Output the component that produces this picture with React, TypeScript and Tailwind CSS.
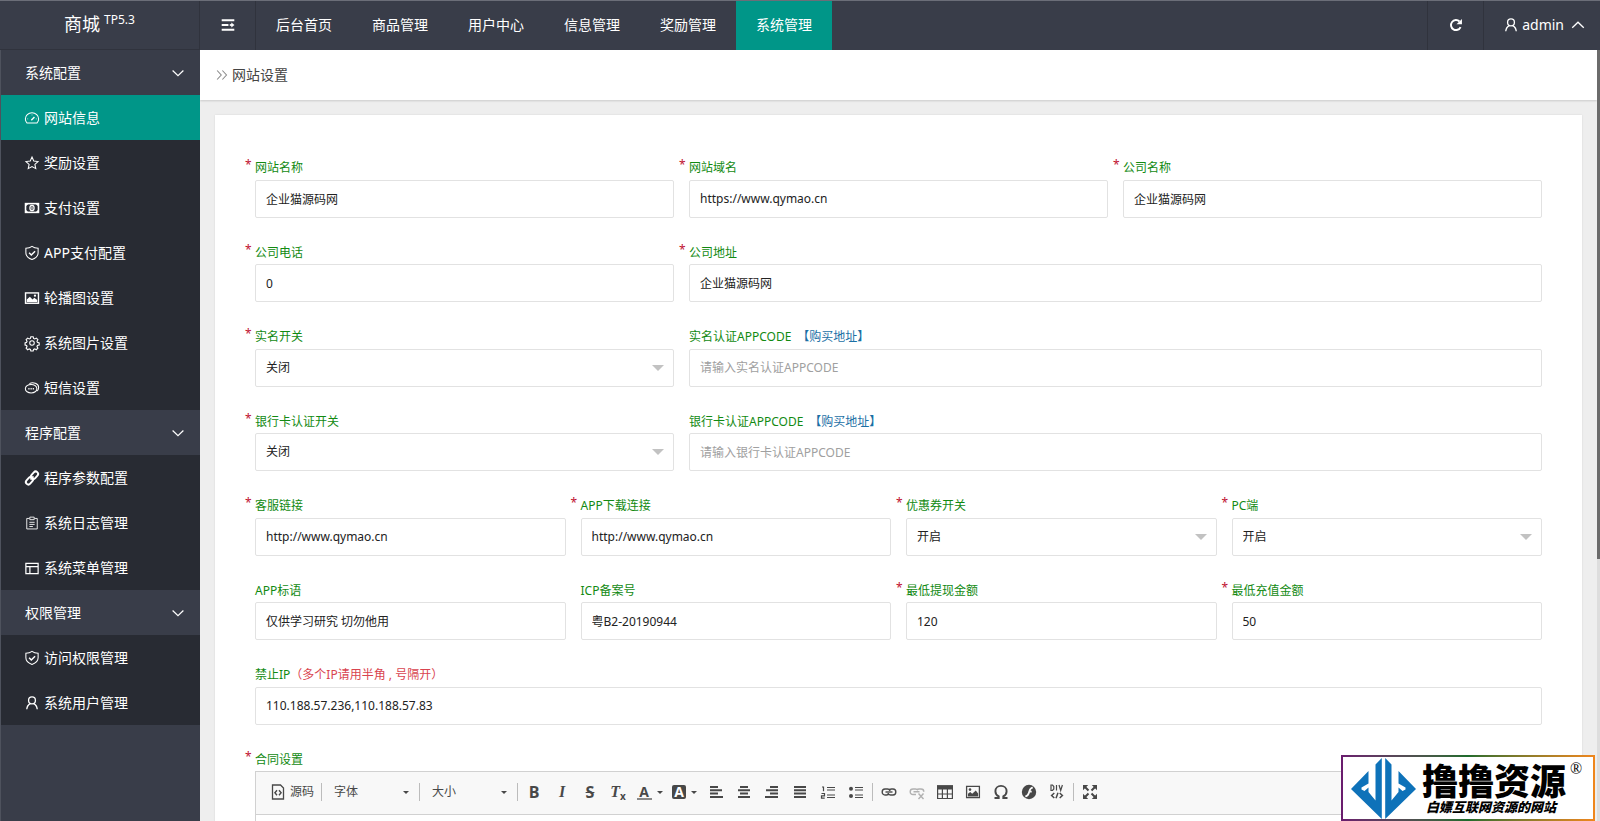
import React from "react";

const menus = [
  {
    title: "系统配置",
    items: [
      { name: "网站信息", icon: "gauge", active: true },
      { name: "奖励设置", icon: "star" },
      { name: "支付设置", icon: "money" },
      { name: "APP支付配置", icon: "shield" },
      { name: "轮播图设置", icon: "image" },
      { name: "系统图片设置", icon: "gear" },
      { name: "短信设置", icon: "chat" },
    ],
  },
  {
    title: "程序配置",
    items: [
      { name: "程序参数配置", icon: "link" },
      { name: "系统日志管理", icon: "log" },
      { name: "系统菜单管理", icon: "layout" },
    ],
  },
  {
    title: "权限管理",
    items: [
      { name: "访问权限管理", icon: "shield" },
      { name: "系统用户管理", icon: "user" },
    ],
  },
];

const navs = ["后台首页", "商品管理", "用户中心", "信息管理", "奖励管理", "系统管理"];

const icons: Record<string, React.ReactNode> = {
  gauge: (
    <>
      <path d="M2.400 13.800C1 12.400.4 10.800.4 9A7.600 7 0 0 1 15.600 9c0 1.800-.6 3.400-2 4.800Z" />
      <path d="M7.200 10.600 10.800 6.800" strokeWidth="1.600" />
      <path d="M2.600 9h1M8 4v1M12.400 9h1" strokeWidth="0.800" />
    </>
  ),
  star: <path d="m8 1.200 2 4.500 4.900.6-3.600 3.300 1 4.800L8 12l-4.300 2.400 1-4.800L1.100 6.300 6 5.700Z" />,
  money: (
    <>
      <rect x=".6" y="3" width="14.800" height="10" strokeWidth="1.800" />
      <ellipse cx="8" cy="8" rx="2.400" ry="3" strokeWidth="1.400" />
      <path d="M8 6.400v3.200" />
      <path d="M1 3h3L1 6ZM15 3h-3l3 3ZM1 13h3l-3-3ZM15 13h-3l3-3Z" fill="currentColor" stroke="none" />
    </>
  ),
  shield: (
    <>
      <path d="M8 .4C6 1.900 3.800 2.500 1 2.600v5.200c0 3.900 3 6.200 7 7.700 4-1.500 7-3.800 7-7.700V2.600C12.200 2.500 10 1.900 8 .4Z" />
      <path d="m4.700 7.700 2.500 2.500L11.500 6" strokeWidth="1.700" />
    </>
  ),
  image: (
    <>
      <rect x=".6" y="2.200" width="14.800" height="11.800" strokeWidth="1.600" />
      <path d="M2 12.600V9.800L5.600 6.500 8.600 9.600l2-1.800 3.400 2.600v2.200Z" fill="currentColor" stroke="none" />
      <circle cx="11.400" cy="5.400" r="1.300" fill="currentColor" stroke="none" />
    </>
  ),
  gear: (
    <>
      <circle cx="8" cy="8" r="2.600" />
      <path
        d="M6.700.8h2.600l.5 2 1.300.6 1.900-1 1.700 1.800-1 1.800.5 1.300 2 .6v2.400l-2 .6-.5 1.200 1 1.900-1.800 1.700-1.800-1-1.300.5-.5 2H6.700l-.5-2-1.300-.5-1.900 1L1.300 14l1-1.900-.5-1.200-1.700-.6V7.900l1.700-.6.5-1.300-1-1.800L3 2.400l1.900 1 1.300-.6Z"
        strokeWidth="1.300"
      />
    </>
  ),
  chat: (
    <>
      <ellipse cx="7" cy="8.800" rx="6.600" ry="4.900" />
      <path d="M5 3C9 1 15.600 2.600 15.600 7.300c0 1.800-.8 3.300-2.200 4.300" />
      <path d="M3.800 8.900h1.400M6.300 8.900h1.400M8.800 8.900h1.400" strokeWidth="1.700" />
    </>
  ),
  link: (
    <g transform="rotate(-48 8 8)" strokeWidth="2.200">
      <rect x="-1" y="5.200" width="9.400" height="5.600" rx="2.800" />
      <rect x="7.600" y="5.200" width="9.400" height="5.600" rx="2.800" />
      <path d="M5.500 8h5" strokeWidth="1.800" />
    </g>
  ),
  log: (
    <>
      <path d="M5 2.800H2v12h12V2.800H11" strokeWidth="1" />
      <path d="M5.500 1.300h5v2.900h-5ZM5 7.200h6M5 9.600h6M5 12h4" strokeWidth="1" />
    </>
  ),
  layout: <path d="M1 2.800h14v11.600H1ZM1 6.400h14M5.600 6.400v8" strokeWidth="1.400" />,
  user: (
    <>
      <circle cx="8" cy="5" r="3.900" strokeWidth="1.500" />
      <path d="M2 15.200c.3-3.200 1.800-5.600 4.200-6.600M14 15.200c-.3-3.200-1.800-5.600-4.200-6.600" strokeWidth="1.500" />
    </>
  ),
  down: <path d="m.8 4.600 7.200 7 7.200-7" strokeWidth="1.600" />,
  up: <path d="m1.400 11.200 6.600-6.400 6.600 6.400" strokeWidth="1.500" />,
  toggle: (
    <>
      <path d="M.8 2.600h14.400M.8 8h7.700M.8 13.400h14.400" strokeWidth="2.200" />
      <path d="M10 8h3" strokeWidth="2" />
      <path d="m11.800 5.200 3.600 2.800-3.600 2.800Z" fill="currentColor" stroke="none" />
    </>
  ),
  refresh: (
    <>
      <path d="M13.200 10.300A5.700 5.700 0 1 1 12 4" strokeWidth="2.200" />
      <path d="M14.800 1v6.200H8.600Z" fill="currentColor" stroke="none" />
    </>
  ),
  crumb: <path d="m1.500 2 5.500 6-5.500 6M8.500 2l5.500 6-5.500 6" strokeWidth="1.400" />,
  source: (
    <>
      <path d="M2.500 1h8l3 3v11h-11Z" strokeWidth="1.300" />
      <path d="M7 6.200 4.900 8.700 7 11.200M9 6.200l2.100 2.500L9 11.200" strokeWidth="1.400" />
    </>
  ),
  alignLeft: <path d="M2 3h8M2 6.300h12M2 9.600h8M2 12.900h13" strokeWidth="2" />,
  alignCenter: <path d="M4 3h8M2 6.300h12M4 9.600h8M2 12.900h12" strokeWidth="2" />,
  alignRight: <path d="M6 3h8M2 6.300h12M6 9.600h8M1 12.900h13" strokeWidth="2" />,
  alignJustify: <path d="M2 3h12M2 6.300h12M2 9.600h12M2 12.900h12" strokeWidth="2" />,
  ol: (
    <>
      <path d="M2 3h1.500v4.200M1.500 9.500h3v2.300h-3v2.400h3.200" />
      <path d="M7 3.500h8M7 6h8M7 11h8M7 13.500h8" />
    </>
  ),
  ul: (
    <>
      <circle cx="3" cy="4.700" r="2" fill="currentColor" stroke="none" />
      <circle cx="3" cy="12" r="2" fill="currentColor" stroke="none" />
      <path d="M7 3.500h8M7 6h8M7 11h8M7 13.500h8" />
    </>
  ),
  chain: (
    <>
      <path d="M7.500 9.500c0 1-1 1.500-2 1.500H4C2.300 11 1.200 9.700 1.200 8S2.300 5 4 5h2.500c1.300 0 2.300.7 2.500 1.800" strokeWidth="1.400" />
      <path d="M8.500 6.500c0-1 1-1.500 2-1.500H12c1.700 0 2.800 1.300 2.800 3s-1.100 3-2.800 3H9.500c-1.300 0-2.300-.7-2.500-1.800" strokeWidth="1.400" />
      <path d="M4.500 8h7" strokeWidth="1.400" />
    </>
  ),
  unchain: (
    <>
      <path d="M7 10.500H4C2.300 10.500 1.200 9.400 1.200 7.700S2.300 5 4 5h2.500c1 0 2 .5 2.300 1.300" strokeWidth="1.400" />
      <path d="M8 6c.4-.7 1.100-1 2-1h2c1.700 0 2.800 1.200 2.800 2.700M4.500 7.700h6" strokeWidth="1.400" />
      <path d="m9.500 9.500 5 5.500M14.500 9.500l-5 5.500" strokeWidth="1.400" />
    </>
  ),
  table: (
    <>
      <path d="M.6 2h14.800v12.500H.6ZM.6 10h14.800M5.400 4v10.500M10.400 4v10.500" strokeWidth="1.200" />
      <path d="M0 1.200h16v4.300H0Z" fill="currentColor" stroke="none" />
    </>
  ),
  picture: (
    <>
      <path d="M1.600 2.400h12.800v11.200H1.600Z" strokeWidth="1.300" />
      <path d="M3 12.500V9.800l2.200-1.700 2 1.600L10.800 6.500l2.300 3v3Z" fill="currentColor" stroke="none" />
      <circle cx="5" cy="5.600" r="1.300" fill="currentColor" stroke="none" />
    </>
  ),
  omega: (
    <path
      d="M1.500 14h4.200v-1.600C3.600 11.300 2.400 9.600 2.400 7.200 2.400 4 4.800 1.900 8 1.900S13.600 4 13.600 7.200c0 2.400-1.200 4.100-3.300 5.200V14h4.200"
      strokeWidth="1.900"
    />
  ),
  flash: (
    <>
      <circle cx="8" cy="8" r="7.200" fill="currentColor" stroke="none" />
      <path d="M11.800 3.700C8.600 3.800 8.700 7 7.700 9.400c-.6 1.600-1.500 2.800-3.400 2.900M7.800 7.700h2.900" stroke="#f8f8f8" strokeWidth="1.800" />
    </>
  ),
  div: (
    <>
      <path d="M2 1v5.500h1.500L4.800 5V2.500L3.500 1ZM7.500 1v5.500M10 1l1.700 5.500L13.400 1" />
      <path d="M5.300 9 2.600 11.500l2.700 2.500M10.700 9l2.700 2.500-2.700 2.500M9 8.700 7 14.300" strokeWidth="1.500" />
    </>
  ),
  maximize: (
    <>
      <path d="m2 2 4.500 4.500M14 2 9.500 6.500M2 14l4.500-4.500M14 14 9.500 9.500" strokeWidth="2" />
      <path d="M1 1h5.200L1 6.200ZM15 1H9.800L15 6.200ZM1 15h5.200L1 9.800ZM15 15H9.800L15 9.800Z" fill="currentColor" stroke="none" />
    </>
  ),
};

const Icon: React.FC<{ name: string; className?: string }> = ({ name, className = "size-3.5" }) => (
  <svg
    viewBox="0 0 16 16"
    fill="none"
    stroke="currentColor"
    strokeWidth="1.200"
    className={"shrink-0 overflow-visible " + className}
    aria-hidden="true"
  >
    {icons[name]}
  </svg>
);

const Caret: React.FC<{ className?: string }> = ({ className = "" }) => (
  <span
    className={
      "pointer-events-none border-x-[3px] border-t-[3px] border-x-transparent border-t-[#484848] " + className
    }
  />
);

type FieldProps = {
  id: string;
  label: string;
  span: string;
  value?: string;
  required?: boolean;
  placeholder?: string;
  extra?: React.ReactNode;
  options?: string[];
};

const FieldLabel: React.FC<{ id: string; label: string; required?: boolean; extra?: React.ReactNode }> = ({
  id,
  label,
  required,
  extra,
}) => (
  <div className="relative mb-0.5 leading-relaxed text-[#128a12]">
    {required && <span className="absolute -left-2.5 -top-[3px] text-[#c01030]">*</span>}
    <label htmlFor={id}>{label}</label>
    {extra}
  </div>
);

const Field: React.FC<FieldProps> = ({ id, label, span, value, required, placeholder, extra, options }) => (
  <div className={span}>
    <FieldLabel id={id} label={label} required={required} extra={extra} />
    {options ? (
      <div className="relative">
        <select
          id={id}
          className="block h-[38px] w-full appearance-none rounded-[2px] border border-[#e2e2e2] bg-white px-2.5 text-[#222] outline-none"
        >
          {options.map((o) => (
            <option key={o}>{o}</option>
          ))}
        </select>
        <span className="pointer-events-none absolute right-2.5 top-4 border-x-[6px] border-t-[6px] border-x-transparent border-t-[#c2c2c2]" />
      </div>
    ) : (
      <input
        id={id}
        type="text"
        defaultValue={value}
        placeholder={placeholder}
        className="block h-[38px] w-full rounded-[2px] border border-[#e2e2e2] bg-white px-2.5 text-[#222] outline-none placeholder:text-[#a0a0a0]"
      />
    )}
  </div>
);

const BuyLink: React.FC = () => (
  <a href="#buy" className="ml-1.5 text-[#1a6fa5]">
    【购买地址】
  </a>
);

const ToolButton: React.FC<{ title: string; children: React.ReactNode; wide?: boolean }> = ({
  title,
  children,
  wide,
}) => (
  <button
    type="button"
    title={title}
    className={"flex h-7 items-center justify-center " + (wide ? "w-[35px] gap-[5px]" : "w-7")}
  >
    {children}
  </button>
);

const Separator: React.FC = () => <span className="mx-0.5 h-[18px] w-px bg-[#bcbcbc]" />;

const ToolSelect: React.FC<{ label: string }> = ({ label }) => (
  <div className="relative flex h-7 w-[93px] items-center">
    <select aria-label={label} className="h-full w-full appearance-none bg-transparent pl-2.5 text-[#484848] outline-none">
      <option>{label}</option>
    </select>
    <Caret className="absolute right-2" />
  </div>
);

const Toolbar: React.FC = () => (
  <div className="flex items-center border-b border-[#d1d1d1] bg-[#f8f8f8] pb-2 pl-2.5 pt-1.5 text-[#484848]">
    <button type="button" className="flex h-7 items-center gap-1 pl-1 pr-[5px]">
      <Icon name="source" className="size-4" />
      源码
    </button>
    <Separator />
    <ToolSelect label="字体" />
    <Separator />
    <ToolSelect label="大小" />
    <Separator />
    <ToolButton title="加粗">
      <b className="font-[Open_Sans,sans-serif] text-base leading-4">B</b>
    </ToolButton>
    <ToolButton title="倾斜">
      <b className="font-[Liberation_Serif,serif] text-base italic leading-4">I</b>
    </ToolButton>
    <ToolButton title="删除线">
      <b className="font-[Open_Sans,sans-serif] text-base leading-4 line-through">S</b>
    </ToolButton>
    <ToolButton title="清除格式">
      <b className="font-[Liberation_Serif,serif] text-base italic leading-4">T</b>
      <b className="pt-2 text-[10px] leading-3">x</b>
    </ToolButton>
    <ToolButton title="文本颜色" wide>
      <b className="w-[15px] border-b-2 border-[#888] font-[Open_Sans,sans-serif] text-sm leading-[13px]">A</b>
      <Caret />
    </ToolButton>
    <ToolButton title="背景颜色" wide>
      <b className="w-3.5 rounded-[2px] bg-[#484848] font-[Open_Sans,sans-serif] text-sm leading-[14px] text-white">A</b>
      <Caret />
    </ToolButton>
    {[
      ["alignLeft", "左对齐"],
      ["alignCenter", "居中"],
      ["alignRight", "右对齐"],
      ["alignJustify", "两端对齐"],
      ["ol", "编号列表"],
      ["ul", "项目列表"],
    ].map(([icon, title]) => (
      <ToolButton key={icon} title={title}>
        <Icon name={icon} className="size-4" />
      </ToolButton>
    ))}
    <Separator />
    <ToolButton title="插入链接">
      <Icon name="chain" className="size-4" />
    </ToolButton>
    <ToolButton title="取消链接">
      <Icon name="unchain" className="size-4 opacity-40" />
    </ToolButton>
    {[
      ["table", "表格"],
      ["picture", "图像"],
      ["omega", "特殊符号"],
      ["flash", "Flash"],
      ["div", "创建 Div 容器"],
    ].map(([icon, title]) => (
      <ToolButton key={icon} title={title}>
        <Icon name={icon} className="size-4" />
      </ToolButton>
    ))}
    <Separator />
    <ToolButton title="全屏">
      <Icon name="maximize" className="size-4" />
    </ToolButton>
  </div>
);

const Header: React.FC = () => (
  <header className="flex h-[50px] shrink-0 border-t border-[#6b6e78] bg-[#393d49] text-sm text-white">
    <h1 className="flex w-[200px] shrink-0 items-center justify-center border-b border-r border-[#30333d] pb-0.5 text-lg">
      商城
      <sup className="top-0 ml-1 self-start pt-[11px] text-xs leading-4">TP5.3</sup>
    </h1>
    <button
      type="button"
      aria-label="收起菜单"
      className="flex w-14 items-center justify-center border-r border-[#30333d] pb-0.5"
    >
      <Icon name="toggle" />
    </button>
    <nav className="flex flex-1">
      {navs.map((n) => (
        <a
          key={n}
          href="#nav"
          className={"flex items-center px-5 pb-0.5 " + (n === "系统管理" ? "bg-[#009688]" : "")}
        >
          {n}
        </a>
      ))}
    </nav>
    <button
      type="button"
      aria-label="刷新"
      className="flex w-14 items-center justify-center border-l border-[#30333d] pb-0.5"
    >
      <Icon name="refresh" />
    </button>
    <button type="button" className="flex items-center border-l border-[#30333d] pb-0.5 pl-5 pr-[15px]">
      <Icon name="user" />
      <span className="ml-1 mr-[7px]">admin</span>
      <Icon name="up" />
    </button>
  </header>
);

const Sidebar: React.FC = () => (
  <aside className="w-[200px] shrink-0 border-l border-[#4e525d] bg-[#393d49] text-sm text-white">
    {menus.map((m) => (
      <div key={m.title}>
        <button type="button" className="flex h-[45px] w-full items-center justify-between pl-6 pr-4">
          {m.title}
          <Icon name="down" className="size-3" />
        </button>
        <ul className="bg-[#282b33]">
          {m.items.map((item) => (
            <li key={item.name}>
              <a
                href="#menu"
                className={"flex h-[45px] items-center gap-[5px] pl-6 " + (item.active ? "bg-[#009688]" : "")}
              >
                <Icon name={item.icon} />
                {item.name}
              </a>
            </li>
          ))}
        </ul>
      </div>
    ))}
  </aside>
);

const Watermark: React.FC = () => (
  <div className="absolute bottom-0 right-[5px] bg-linear-to-r from-[#6a1b6e] via-[#1d6b2c] to-[#f0861c] p-0.5">
    <div className="flex h-[62px] w-[250px] items-center bg-white pl-2">
      <svg viewBox="0 0 65 61" className="h-[61px] w-[65px] shrink-0 fill-[#0e72b9]" aria-hidden="true">
        <path d="M0 31 17.500 13v12.500L10.500 29.500v2l3 1.500 4-3.500V34l7 8.500V6.500L30.800 0v61Z" />
        <path d="M65 31 47.500 13v12.500L54.500 29.500v2l-3 1.500-4-3.500V34l-7 8.500V6.500L34.200 0v61Z" />
      </svg>
      <div className="ml-1.5 flex flex-col gap-0.5 whitespace-nowrap font-['Noto_Sans_CJK_SC',sans-serif] font-black text-black">
        <div className="flex text-4xl leading-9">
          撸撸资源
          <span className="ml-1 font-[Liberation_Serif,serif] text-base font-normal leading-4">®</span>
        </div>
        <div className="pl-1 text-[13px] italic leading-4">白嫖互联网资源的网站</div>
      </div>
    </div>
  </div>
);

const App: React.FC = () => {
  return (
    <div className="relative flex h-screen flex-col overflow-hidden font-['Noto_Sans','Noto_Sans_CJK_SC',sans-serif]">
      <Header />
      <div className="flex min-h-0 flex-1">
        <Sidebar />
        <main className="min-w-0 flex-1 overflow-hidden bg-[#eee]">
          <div className="flex h-[50px] items-center gap-1 bg-white pl-4 text-sm text-[#444] shadow-[0_1px_2px_rgba(0,0,0,0.15)]">
            <Icon name="crumb" className="size-3 text-[#888]" />
            网站设置
          </div>
          <form className="m-[15px] grid grid-cols-12 gap-x-[15px] gap-y-[25px] bg-white pb-10 pl-10 pr-10 pt-[43px] text-xs shadow-[0_0_2px_rgba(0,0,0,0.1)]">
            <Field id="webname" label="网站名称" span="col-span-4" value="企业猫源码网" required />
            <Field id="domain" label="网站域名" span="col-span-4" value="https://www.qymao.cn" required />
            <Field id="company" label="公司名称" span="col-span-4" value="企业猫源码网" required />
            <Field id="tel" label="公司电话" span="col-span-4" value="0" required />
            <Field id="address" label="公司地址" span="col-span-8" value="企业猫源码网" required />
            <Field id="realname" label="实名开关" span="col-span-4" options={["关闭", "开启"]} required />
            <Field
              id="realcode"
              label="实名认证APPCODE"
              span="col-span-8"
              placeholder="请输入实名认证APPCODE"
              extra={<BuyLink />}
            />
            <Field id="bank" label="银行卡认证开关" span="col-span-4" options={["关闭", "开启"]} required />
            <Field
              id="bankcode"
              label="银行卡认证APPCODE"
              span="col-span-8"
              placeholder="请输入银行卡认证APPCODE"
              extra={<BuyLink />}
            />
            <Field id="service" label="客服链接" span="col-span-3" value="http://www.qymao.cn" required />
            <Field id="download" label="APP下载连接" span="col-span-3" value="http://www.qymao.cn" required />
            <Field id="coupon" label="优惠券开关" span="col-span-3" options={["开启", "关闭"]} required />
            <Field id="pc" label="PC端" span="col-span-3" options={["开启", "关闭"]} required />
            <Field id="slogan" label="APP标语" span="col-span-3" value="仅供学习研究 切勿他用" />
            <Field id="icp" label="ICP备案号" span="col-span-3" value="粤B2-20190944" />
            <Field id="minout" label="最低提现金额" span="col-span-3" value="120" required />
            <Field id="minin" label="最低充值金额" span="col-span-3" value="50" required />
            <Field
              id="banip"
              label="禁止IP"
              span="col-span-12"
              value="110.188.57.236,110.188.57.83"
              extra={<span className="text-[#d9444f]">（多个IP请用半角 , 号隔开）</span>}
            />
            <div className="col-span-12">
              <FieldLabel id="contract" label="合同设置" required />
              <div className="border border-[#d1d1d1]">
                <Toolbar />
                <textarea id="contract" className="block h-[200px] w-full resize-none p-5 outline-none" />
              </div>
            </div>
          </form>
        </main>
        <div className="w-[3px] shrink-0 bg-[#ddd]">
          <div className="h-[66%] bg-[#6b6b6b]" />
        </div>
      </div>
      <Watermark />
    </div>
  );
};

export default App;
